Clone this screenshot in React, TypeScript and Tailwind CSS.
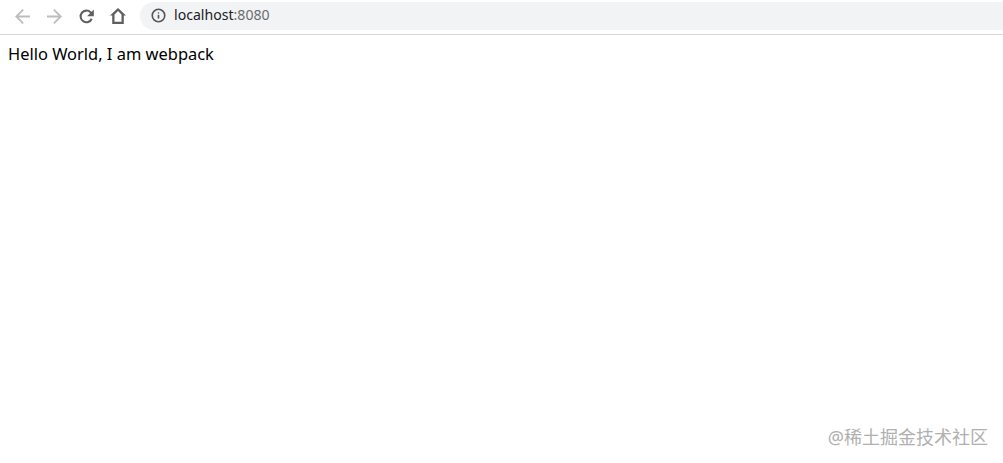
import { Info } from 'lucide-react'

function Back({ className }: { className: string }) {
  return (
    <svg viewBox="0 0 16 16" className={className} fill="currentColor">
      <path d="M16 7H3.83l5.59-5.59L8 0 0 8l8 8 1.41-1.41L3.83 9H16V7z" />
    </svg>
  )
}

function Forward({ className }: { className: string }) {
  return (
    <svg viewBox="0 0 16 16" className={className} fill="currentColor">
      <path d="M8 0 6.59 1.41 12.17 7H0v2h12.17l-5.58 5.59L8 16l8-8z" />
    </svg>
  )
}

function Reload({ className }: { className: string }) {
  return (
    <svg viewBox="0 0 16 16" className={className} fill="none" stroke="currentColor" strokeWidth="2.2">
      <path d="M13.6 10.4A6.2 6.2 0 1 1 12.4 3.6L14 5.6" />
      <path d="M15.8 0.4V7.6H8.6L15.8 0.4z" fill="currentColor" stroke="none" />
    </svg>
  )
}

function Home({ className }: { className: string }) {
  return (
    <svg viewBox="0 0 16 16" className={className} fill="currentColor">
      <path d="M8 0 0 7.6h2.2V16h11.6V7.6H16L8 0zm3.5 13.7h-7V6.4L8 3.1l3.5 3.3v7.3z" />
    </svg>
  )
}

export default function App() {
  return (
    <div className="relative h-[463px] w-[1003px] overflow-hidden bg-white font-['Noto_Sans',sans-serif] text-black">
      {/* Browser toolbar */}
      <div className="flex h-[35px] items-start border-b border-[#d6d6d6] pt-[2px]">
        <div className="flex h-[28px] items-center pl-[15px]">
          <Back className="h-[15px] w-[15px] text-[#bdbdbd]" />
          <Forward className="ml-[17px] h-[15px] w-[15px] text-[#bdbdbd]" />
          <Reload className="ml-[17px] h-[15px] w-[15px] text-[#5f5f5f]" />
          <Home className="ml-[16px] h-4 w-4 text-[#5f5f5f]" />
        </div>
        <div className="ml-[14px] flex h-[28px] flex-1 items-center rounded-l-full bg-[#f1f3f4] pl-[11px]">
          <Info className="mb-[1px] h-[15px] w-[15px] text-[#555555]" strokeWidth={2.6} />
          <span className="mb-[2px] ml-[8px] text-[14.1px] text-[#202124]">
            localhost<span className="text-[#6b6e72]">:8080</span>
          </span>
        </div>
      </div>

      <p className="pl-2 pt-[8px] text-[16.45px] leading-[22px]">Hello World, I am webpack</p>

      {/* Watermark */}
      <span className="absolute right-[15px] top-[425px] font-['Noto_Sans','Noto_Sans_CJK_SC',sans-serif] text-[18px] leading-[24px] text-[#b0b0b0]">
        @稀土掘金技术社区
      </span>
    </div>
  )
}
